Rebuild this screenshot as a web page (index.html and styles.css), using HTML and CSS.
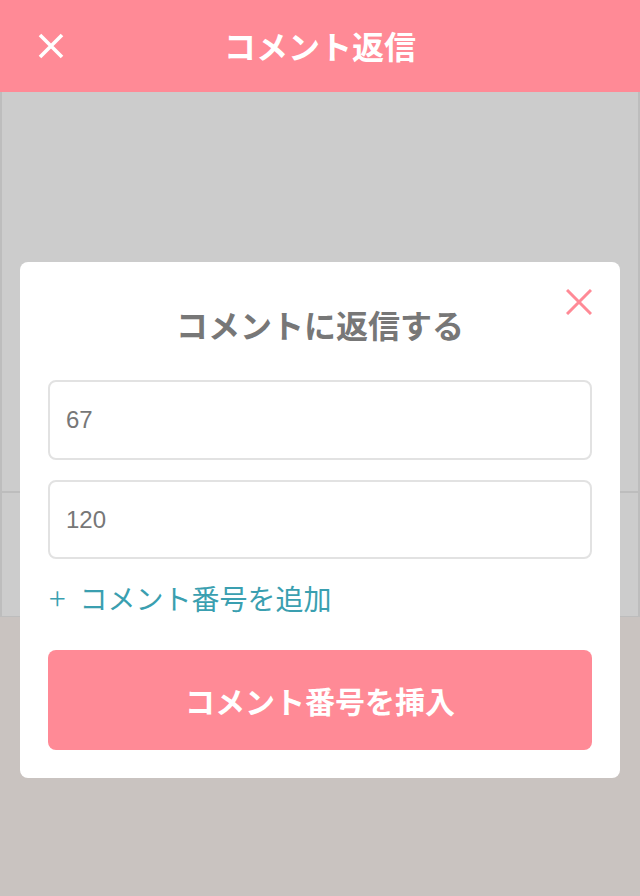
FILE: index.html
```html
<!DOCTYPE html>
<html lang="ja">
<head>
<meta charset="utf-8">
<link rel="stylesheet" href="styles.css">
</head>
<body>
<div class="page">
  <header class="topbar">
    <svg class="topbar-close" width="26" height="26" viewBox="0 0 26 26"><path d="M2 2 L24 24 M24 2 L2 24" stroke="#fff" stroke-width="3.6" stroke-linecap="butt"/></svg>
    <h1 class="topbar-title">コメント返信</h1>
  </header>
  <div class="bg">
    <div class="bg-box bg-box1"></div>
    <div class="bg-box bg-box2"></div>
    <div class="bg-rest"></div>
  </div>
  <div class="modal">
    <svg class="modal-close" width="26" height="26" viewBox="0 0 26 26"><path d="M1 1 L25 25 M25 1 L1 25" stroke="#ff8a96" stroke-width="3"/></svg>
    <h2 class="modal-title">コメントに返信する</h2>
    <div class="field">67</div>
    <div class="field">120</div>
    <div class="add-link"><span class="plus">+</span>コメント番号を追加</div>
    <button class="submit">コメント番号を挿入</button>
  </div>
</div>
</body>
</html>
```
FILE: styles.css
```css
* { box-sizing: border-box; }
html, body { margin: 0; padding: 0; }
body {
  width: 640px;
  height: 896px;
  overflow: hidden;
  font-family: "Noto Sans CJK JP", "Noto Sans", sans-serif;
  background: #c9c3c0;
}
.page { position: relative; width: 640px; height: 896px; }
.topbar {
  height: 92px;
  background: #ff8a96;
  display: flex;
  align-items: center;
  justify-content: center;
  position: relative;
}
.topbar-close { position: absolute; left: 38px; top: 33px; }
.topbar-title {
  margin: 0 0 2px;
  color: #fff;
  font-size: 32px;
  font-weight: 700;
  line-height: 48px;
}
.bg { display: flex; flex-direction: column; }
.bg-box {
  background: #cccccc;
  border-left: 2px solid #bdbdbd;
  border-right: 2px solid #bdbdbd;
}
.bg-box1 { height: 401px; border-bottom: 2px solid #bdbdbd; }
.bg-box2 { height: 124px; border-bottom: 1px solid #bdbdbd; }
.modal {
  position: absolute;
  left: 20px;
  top: 262px;
  width: 600px;
  height: 516px;
  background: #fff;
  border-radius: 8px;
  padding: 38px 28px 28px;
  display: flex;
  flex-direction: column;
}
.modal-close { position: absolute; right: 28px; top: 27px; }
.modal-title {
  margin: 0;
  text-align: center;
  color: #777;
  font-size: 32px;
  font-weight: 700;
  line-height: 48px;
}
.field {
  margin-top: 32px;
  height: 80px;
  border: 2px solid #e2e2e2;
  border-radius: 8px;
  padding: 0 16px;
  display: flex;
  align-items: center;
  font-family: "Liberation Sans", Arial, sans-serif;
  font-size: 24px;
  color: #777;
}
.field + .field { margin-top: 20px; }
.add-link {
  margin-top: 18px;
  color: #3a9fb0;
  font-size: 28px;
  line-height: 40px;
  padding-left: 1px;
}
.plus { display: inline-block; margin-right: 14px; font-size: 31px; font-weight: 300; }
.submit {
  margin-top: 32px;
  height: 100px;
  border: none;
  border-radius: 8px;
  background: #ff8a96;
  color: #fff;
  font-family: "Noto Sans CJK JP", "Noto Sans", sans-serif;
  font-size: 30px;
  font-weight: 700;
}
```
